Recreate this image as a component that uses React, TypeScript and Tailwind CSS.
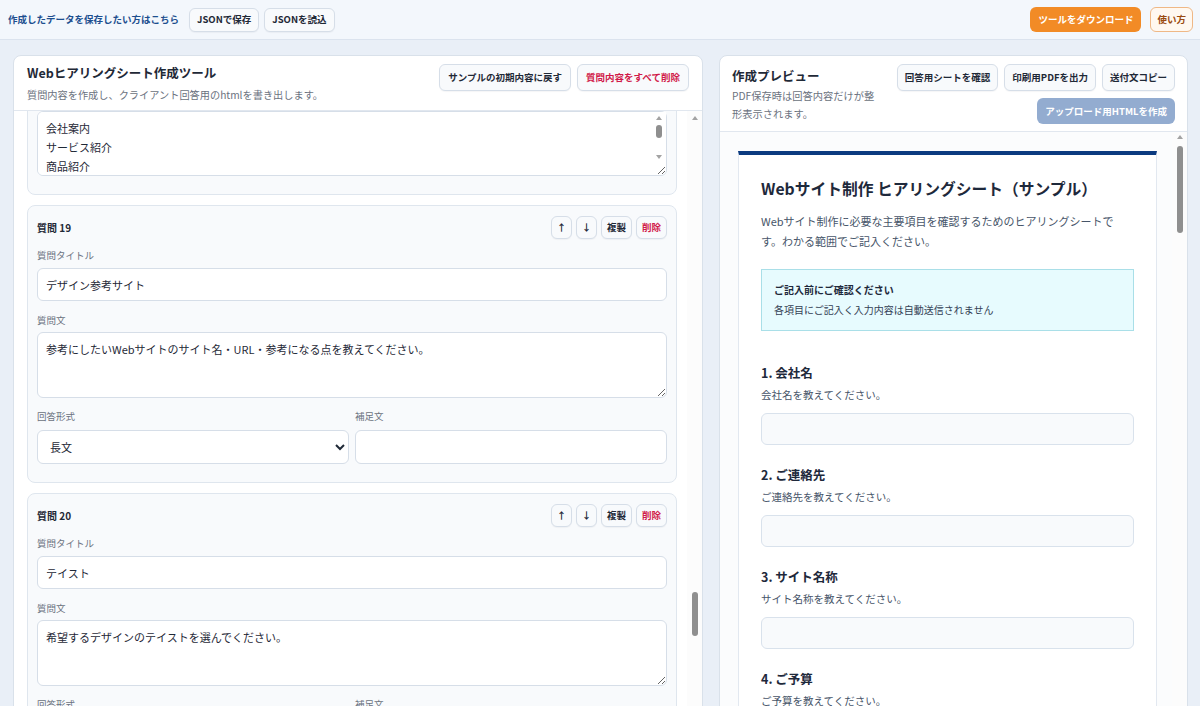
import { useLayoutEffect, useRef } from "react";

type QType = "短文" | "長文" | "単一選択" | "複数選択";
type Question = { title: string; text: string; type: QType; options?: string[] };

const questions: Question[] = [
  { title: "会社名", text: "会社名を教えてください。", type: "短文" },
  { title: "ご連絡先", text: "ご連絡先を教えてください。", type: "短文" },
  { title: "サイト名称", text: "サイト名称を教えてください。", type: "短文" },
  { title: "ご予算", text: "ご予算を教えてください。", type: "短文" },
  { title: "公開希望日", text: "公開希望日を教えてください。", type: "短文" },
  { title: "サイト制作の目的", text: "サイト制作の目的を教えてください。", type: "長文" },
  { title: "ターゲット", text: "想定しているターゲットを教えてください。", type: "長文" },
  { title: "現在のサイトURL", text: "現在のサイトURLを教えてください。", type: "短文" },
  { title: "現在のサイトの課題", text: "現在のサイトの課題を教えてください。", type: "長文" },
  { title: "競合サイト", text: "競合となるサイトを教えてください。", type: "長文" },
  { title: "強み・特徴", text: "御社の強み・特徴を教えてください。", type: "長文" },
  { title: "ページ数", text: "想定しているページ数を選んでください。", type: "単一選択", options: ["1〜5ページ", "6〜10ページ", "11〜20ページ", "21ページ以上", "未定"] },
  { title: "サイトの種類", text: "制作したいサイトの種類を選んでください。", type: "単一選択", options: ["コーポレートサイト", "サービスサイト", "ECサイト", "採用サイト", "LP"] },
  { title: "必要な機能", text: "必要な機能を選んでください。", type: "複数選択", options: ["お問い合わせフォーム", "ブログ", "予約機能", "多言語対応", "SNS連携"] },
  { title: "CMSの導入", text: "CMSの導入について選んでください。", type: "単一選択", options: ["希望する", "希望しない", "相談したい"] },
  { title: "ドメイン・サーバー", text: "ドメイン・サーバーの状況を選んでください。", type: "単一選択", options: ["取得済み", "未取得", "わからない"] },
  { title: "原稿の用意", text: "原稿の用意について選んでください。", type: "単一選択", options: ["用意できる", "一部用意できる", "作成を依頼したい"] },
  { title: "必要なページ", text: "必要なページを選んでください。", type: "複数選択", options: ["会社案内", "サービス紹介", "商品紹介", "実績紹介", "採用情報", "お問い合わせ"] },
  { title: "デザイン参考サイト", text: "参考にしたいWebサイトのサイト名・URL・参考になる点を教えてください。", type: "長文" },
  { title: "テイスト", text: "希望するデザインのテイストを選んでください。", type: "単一選択", options: ["シンプル", "ナチュラル", "高級感", "ポップ", "クール"] },
  { title: "イメージカラー", text: "イメージカラーがあれば教えてください。", type: "短文" },
  { title: "写真・素材の用意", text: "写真・素材の用意について選んでください。", type: "単一選択", options: ["用意できる", "一部用意できる", "撮影を依頼したい"] },
  { title: "公開後の運用", text: "公開後の運用について選んでください。", type: "単一選択", options: ["自社で更新する", "更新を依頼したい", "未定"] },
  { title: "その他ご要望", text: "その他ご要望があれば教えてください。", type: "長文" },
];

const labelCls = "block text-[9.5px] leading-[14px] text-[#6b7280]";
const fieldCls =
  "w-full rounded-md border border-[#d6dee8] bg-white text-[11px] text-[#1f2937] outline-none";

function Btn({ children, className = "" }: { children: React.ReactNode; className?: string }) {
  return (
    <button
      className={`rounded-md border border-[#d6dee8] bg-[#f8fafc] font-bold text-[9.5px] text-[#1f2937] shadow-[0_1px_1px_rgba(15,23,42,0.04)] ${className}`}
    >
      {children}
    </button>
  );
}

// スクロールバー（見た目のみ）
function UpArrow() {
  return <span className="h-0 w-0 border-x-[3.5px] border-b-[4px] border-x-transparent border-b-[#a3a3a3]" />;
}
function DownArrow() {
  return <span className="h-0 w-0 border-x-[3.5px] border-t-[4px] border-x-transparent border-t-[#a3a3a3]" />;
}

function ScrollTrack({ arrowCls, thumbCls }: { arrowCls: string; thumbCls: string }) {
  return (
    <div className="flex w-[15px] flex-shrink-0 flex-col items-center bg-[#fcfcfc]">
      <span className={arrowCls}>
        <UpArrow />
      </span>
      <span className={`w-[6px] rounded-full bg-[#8f8f8f] ${thumbCls}`} />
    </div>
  );
}

function QuestionCard({ q, no, cardRef }: { q: Question; no: number; cardRef?: React.Ref<HTMLDivElement> }) {
  return (
    <div ref={cardRef} className="rounded-lg border border-[#dfe6ee] bg-[#f8fafc] px-[9px] pt-[10px] pb-[18px]">
      <div className="flex items-center justify-between">
        <span className="text-[10px] font-bold text-[#1f2937]">質問 {no}</span>
        <div className="flex gap-1">
          <Btn className="h-[23px] w-[21px]">↑</Btn>
          <Btn className="h-[23px] w-[21px]">↓</Btn>
          <Btn className="h-[23px] w-[31px]">複製</Btn>
          <Btn className="h-[23px] w-[31px] text-[#d11a4a]">削除</Btn>
        </div>
      </div>
      <label className={`${labelCls} mt-[9px]`}>質問タイトル</label>
      <input className={`${fieldCls} mt-[6px] block h-[33px] px-2`} defaultValue={q.title} />
      <label className={`${labelCls} mt-[12px]`}>質問文</label>
      <textarea
        className={`${fieldCls} mt-[5px] block h-[66px] px-2 py-[7px] leading-[19px]`}
        defaultValue={q.text}
      />
      <div className="mt-[11px] grid grid-cols-2 gap-[6px]">
        <div>
          <label className={labelCls}>回答形式</label>
          <select className={`${fieldCls} mt-[7px] block h-[34px] px-2`} defaultValue={q.type}>
            <option>短文</option>
            <option>長文</option>
            <option>単一選択</option>
            <option>複数選択</option>
          </select>
        </div>
        <div>
          <label className={labelCls}>補足文</label>
          <input className={`${fieldCls} mt-[7px] block h-[34px] px-2`} defaultValue="" />
        </div>
      </div>
      {q.options && (
        <>
          <label className={`${labelCls} mt-[11px]`}>選択肢（1行に1つ）</label>
          <div className="relative mt-[6px]">
            <textarea
              className={`${fieldCls} block h-[65px] py-[7px] pl-2 pr-[18px] leading-[19px]`}
              defaultValue={q.options.join("\n")}
            />
            {/* テキストエリアのスクロールバー */}
            <div className="absolute top-[1px] right-[1px] bottom-[15px] flex w-[14px] flex-col items-center bg-white">
              <span className="mt-[4px] flex">
                <UpArrow />
              </span>
              <span className="mt-[5px] h-[13px] w-[6px] rounded-full bg-[#8f8f8f]" />
              <span className="mt-auto mb-[2px] flex">
                <DownArrow />
              </span>
            </div>
          </div>
        </>
      )}
    </div>
  );
}

function PreviewQuestion({ q, no }: { q: Question; no: number }) {
  return (
    <div className="mb-[21px]">
      <div className="text-[12.5px] font-bold leading-[18px] text-[#1e293b]">
        {no}. {q.title}
      </div>
      <div className="mt-[5px] text-[10.5px] leading-[16px] text-[#475569]">{q.text}</div>
      {q.options ? (
        <div className="mt-[10px] flex flex-col gap-[8px]">
          {q.options.map((o) => (
            <div key={o} className="flex items-center gap-2 text-[10.5px] text-[#334155]">
              <span
                className={`h-[12px] w-[12px] border border-[#94a3b8] bg-white ${q.type === "単一選択" ? "rounded-full" : "rounded-sm"}`}
              />
              {o}
            </div>
          ))}
        </div>
      ) : (
        <div
          className={`mt-[10px] rounded-md border border-[#d9e2ec] bg-[#f8fafc] ${q.type === "長文" ? "h-[72px]" : "h-[32px]"}`}
        />
      )}
    </div>
  );
}

export default function App() {
  const listRef = useRef<HTMLDivElement>(null);
  const anchorRef = useRef<HTMLDivElement>(null);

  useLayoutEffect(() => {
    const list = listRef.current;
    const anchor = anchorRef.current;
    if (list && anchor) list.scrollTop += anchor.getBoundingClientRect().top - 205;
  }, []);

  return (
    <div className="flex h-[706px] flex-col overflow-hidden bg-[#e9eff7] font-['Noto_Sans_CJK_JP',sans-serif] text-[#1f2937]">
      {/* 上部バー */}
      <header className="flex h-10 flex-shrink-0 items-center justify-between border-b border-[#dbe3ee] bg-[#f3f7fc] pl-2 pr-[7px]">
        <div className="flex items-center">
          <span className="mr-[10px] text-[9.5px] font-bold text-[#1d4f8f]">作成したデータを保存したい方はこちら</span>
          <Btn className="h-6 px-[7px]">JSONで保存</Btn>
          <Btn className="ml-[5px] h-6 px-[7px]">JSONを読込</Btn>
        </div>
        <div className="flex items-center gap-[9px]">
          <button className="h-[25px] rounded-md bg-[#f28b26] px-[8px] text-[9.5px] font-bold text-white">
            ツールをダウンロード
          </button>
          <button className="h-[25px] rounded-md border border-[#efb886] bg-[#fff8f0] px-[6px] text-[9.5px] font-bold text-[#9a4a0f]">
            使い方
          </button>
        </div>
      </header>

      <main className="grid grid-cols-[690px_469px] gap-4 px-[13px] pt-[15px]">
        {/* 左：作成ツール */}
        <section className="flex h-[676px] flex-col overflow-hidden rounded-lg border border-[#d9e1ea] bg-white">
          <div className="flex items-start justify-between border-b border-[#e1e7ef] px-[13px] pt-[8px] pb-[8px]">
            <div>
              <h1 className="text-[12.5px] font-bold leading-[18px] text-[#1f2937]">Webヒアリングシート作成ツール</h1>
              <p className="mt-[5px] text-[10.2px] leading-[15px] text-[#6b7280]">
                質問内容を作成し、クライアント回答用のhtmlを書き出します。
              </p>
            </div>
            <div className="flex gap-[6px]">
              <Btn className="h-[27px] px-2">サンプルの初期内容に戻す</Btn>
              <Btn className="h-[27px] px-2 text-[#d11a4a]">質問内容をすべて削除</Btn>
            </div>
          </div>
          <div className="flex min-h-0 flex-1">
            <div ref={listRef} className="min-w-0 flex-1 overflow-hidden pl-[13px] pr-[10px] pt-[10px] pb-[14px]">
              <div className="flex flex-col gap-[10px]">
                {questions.map((q, i) => (
                  <QuestionCard key={i} q={q} no={i + 1} cardRef={i === 18 ? anchorRef : undefined} />
                ))}
                <button className="h-[34px] rounded-lg border border-dashed border-[#b9c6d6] bg-[#f8fafc] text-[11px] font-bold text-[#1d4f8f]">
                  ＋ 質問を追加
                </button>
              </div>
            </div>
            <ScrollTrack arrowCls="mt-[5px] flex" thumbCls="mt-[472px] h-[44px]" />
          </div>
        </section>

        {/* 右：プレビュー */}
        <section className="flex h-[676px] flex-col overflow-hidden rounded-lg border border-[#d9e1ea] bg-white">
          <div className="flex items-start justify-between border-b border-[#e1e7ef] pl-[12px] pr-[12px] pt-[8px] pb-[7px]">
            <div className="w-[151px] pt-[3px]">
              <h2 className="text-[12.5px] font-bold leading-[18px] text-[#1f2937]">作成プレビュー</h2>
              <p className="mt-[2px] text-[10.25px] leading-[18px] text-[#6b7280]">
                PDF保存時は回答内容だけが整形表示されます。
              </p>
            </div>
            <div className="flex flex-col items-end gap-[7px]">
              <div className="flex gap-[6px]">
                <Btn className="h-[27px] px-[7px]">回答用シートを確認</Btn>
                <Btn className="h-[27px] px-[7px]">印刷用PDFを出力</Btn>
                <Btn className="h-[27px] px-[7px]">送付文コピー</Btn>
              </div>
              <button className="h-[26px] rounded-md bg-[#93acd0] px-[8px] text-[9.5px] font-bold text-white">
                アップロード用HTMLを作成
              </button>
            </div>
          </div>
          <div className="flex min-h-0 flex-1">
            <div className="min-w-0 flex-1 overflow-hidden bg-[#fbfcfd] pl-[18px] pr-[15px] pt-[19px] pb-[20px]">
              <div className="border border-t-4 border-[#e2e8f0] border-t-[#0b3b80] bg-white px-[22px] pt-[23px] pb-[24px]">
                <h3 className="text-[15.75px] font-bold leading-[22px] text-[#1e293b]">
                  Webサイト制作 ヒアリングシート（サンプル）
                </h3>
                <p className="mt-[11px] text-[11px] leading-[20px] text-[#475569]">
                  Webサイト制作に必要な主要項目を確認するためのヒアリングシートです。わかる範囲でご記入ください。
                </p>
                <div className="mt-[18px] border border-[#a9dfe8] bg-[#e7fbfe] px-[12px] pt-[12px] pb-[13px]">
                  <div className="text-[10px] font-bold leading-[15px] text-[#1e293b]">ご記入前にご確認ください</div>
                  <div className="mt-[5px] text-[10px] leading-[15px] text-[#334155]">
                    各項目にご記入く入力内容は自動送信されません
                  </div>
                </div>
                <div className="mt-[33px]">
                  {questions.map((q, i) => (
                    <PreviewQuestion key={i} q={q} no={i + 1} />
                  ))}
                </div>
              </div>
            </div>
            <ScrollTrack arrowCls="mt-[3px] flex" thumbCls="mt-[7px] h-[87px]" />
          </div>
        </section>
      </main>
    </div>
  );
}
